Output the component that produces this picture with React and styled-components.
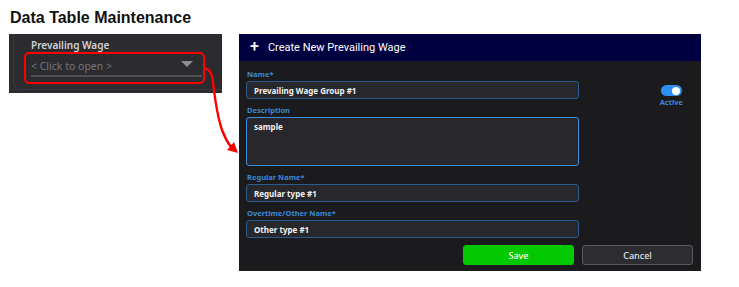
import React from "react";
import styled, { createGlobalStyle } from "styled-components";

const GlobalStyle = createGlobalStyle`
  html, body {
    margin: 0;
    background: #ffffff;
  }
  body {
    width: 739px;
    height: 287px;
    overflow: hidden;
  }
`;

const Page = styled.div`
  position: relative;
  width: 739px;
  height: 287px;
  box-sizing: border-box;
  padding: 9px 0 0 9px;
`;

const Title = styled.h1`
  margin: 0 0 7px 1px;
  font: bold 16px/18px "Liberation Sans", Arial, sans-serif;
  color: #111111;
`;

const Row = styled.div`
  display: flex;
  align-items: flex-start;
  gap: 17px;
`;

// left: the field as it sits on the page
const FieldPanel = styled.div`
  width: 213px;
  height: 59px;
  box-sizing: border-box;
  background: #2b2b30;
  overflow: hidden;
  padding-bottom: 3px;
  display: flex;
  flex-direction: column;
  justify-content: flex-end;
`;

const PanelCard = styled.div`
  margin-left: 4px;
  margin-right: -6px;
  padding: 4px 0 5px 10px;
  border-left: 1px solid #38383e;
  border-bottom: 1px solid #38383e;
  border-bottom-left-radius: 8px;
`;

const PanelLabel = styled.div`
  margin-left: 7px;
  font: 600 10px/14px "Noto Sans", "Open Sans", sans-serif;
  color: #d2d2d6;
`;

const Highlight = styled.div`
  width: 181px;
  box-sizing: border-box;
  border: 2px solid #ff0000;
  border-radius: 5px;
  padding: 2px 1px 5px 5px;
`;

const Select = styled.div`
  display: flex;
  align-items: center;
  justify-content: space-between;
  height: 19px;
  padding-right: 9px;
  border-bottom: 2px solid #4f4f55;
  font: 400 10.5px/16px "Noto Sans", "Open Sans", sans-serif;
  color: #77777d;
`;

const Caret = styled.span`
  width: 0;
  height: 0;
  margin-top: -4px;
  border-left: 6px solid transparent;
  border-right: 6px solid transparent;
  border-top: 6px solid #8e8e94;
`;

// right: the dialog
const Dialog = styled.div`
  width: 462px;
  height: 237px;
  background: #1b1b1d;
  display: flex;
  flex-direction: column;
`;

const DialogHeader = styled.div`
  height: 27px;
  flex: none;
  background: #000040;
  display: flex;
  align-items: center;
  gap: 9px;
  padding-left: 11px;
  font: 400 11px/1 Roboto, "Noto Sans", sans-serif;
  color: #ffffff;
`;

const Plus = styled.span`
  font: 500 16px/1 Roboto, sans-serif;
  margin-top: -2px;
`;

const DialogBody = styled.div`
  flex: 1;
  padding: 8px 8px 6px 7px;
  display: flex;
  flex-direction: column;
`;

const Columns = styled.div`
  display: flex;
  justify-content: space-between;
`;

const Form = styled.div`
  width: 333px;
  display: flex;
  flex-direction: column;
  gap: 6px;
`;

const Field = styled.div`
  display: flex;
  flex-direction: column;
`;

const Label = styled.label`
  height: 11px;
  margin: 0 0 1px 1px;
  font: 700 7.5px/11px "Noto Sans", "Open Sans", sans-serif;
  color: #3a88d6;
`;

const TextInput = styled.input`
  height: 18px;
  box-sizing: border-box;
  margin: 0;
  padding: 0 7px;
  border: 1px solid ${(p) => (p.$focused ? "#3c8de0" : "#2a5b8e")};
  border-radius: 3px;
  background: #27272c;
  font: 700 8px/16px "Noto Sans", "Open Sans", sans-serif;
  color: #f2f2f2;
  outline: none;
`;

const TextArea = styled.textarea`
  height: 49px;
  box-sizing: border-box;
  margin: 0;
  padding: 3px 7px;
  border: 1px solid #3c8de0;
  border-radius: 3px;
  background: #27272c;
  font: 700 8px/11px "Noto Sans", "Open Sans", sans-serif;
  color: #f2f2f2;
  resize: none;
  outline: none;
`;

const Status = styled.div`
  display: flex;
  flex-direction: column;
  align-items: center;
  gap: 1px;
  margin: 16px 10px 0 0;
`;

const Toggle = styled.span`
  width: 21px;
  height: 11px;
  border-radius: 6px;
  background: ${(p) => (p.$on ? "#2e90f5" : "#55555a")};
  display: flex;
  align-items: center;
  justify-content: ${(p) => (p.$on ? "flex-end" : "flex-start")};
  padding: 0 1.5px;
  box-sizing: border-box;
`;

const Knob = styled.span`
  width: 8px;
  height: 8px;
  border-radius: 50%;
  background: #ffffff;
`;

const StatusText = styled.span`
  font: 700 7.5px/11px "Noto Sans", "Open Sans", sans-serif;
  color: #3a88d6;
`;

const Actions = styled.div`
  display: flex;
  justify-content: flex-end;
  gap: 8px;
  margin-top: 7px;
`;

const Button = styled.button`
  width: 111px;
  height: 20px;
  box-sizing: border-box;
  border-radius: 3px;
  border: 1px solid ${(p) => (p.$primary ? "#03c903" : "#5a5a60")};
  background: ${(p) => (p.$primary ? "#03c903" : "#2c2c31")};
  color: ${(p) => (p.$primary ? "#ffffff" : "#e2e2e6")};
  font: 500 9px/1 "Noto Sans", "Open Sans", sans-serif;
  padding: 0;
`;

const ArrowLayer = styled.svg`
  position: absolute;
  left: 0;
  top: 0;
  pointer-events: none;
`;

export default function App() {
  return (
    <Page>
      <GlobalStyle />
      <Title>Data Table Maintenance</Title>
      <Row>
        <FieldPanel>
          <PanelCard>
            <PanelLabel>Prevailing Wage</PanelLabel>
            <Highlight>
              <Select>
                <span>&lt; Click to open &gt;</span>
                <Caret />
              </Select>
            </Highlight>
          </PanelCard>
        </FieldPanel>

        <Dialog>
          <DialogHeader>
            <Plus>+</Plus>
            <span>Create New Prevailing Wage</span>
          </DialogHeader>
          <DialogBody>
            <Columns>
              <Form>
                <Field>
                  <Label>Name*</Label>
                  <TextInput readOnly defaultValue="Prevailing Wage Group #1" />
                </Field>
                <Field>
                  <Label>Description</Label>
                  <TextArea readOnly defaultValue="sample" />
                </Field>
                <Field>
                  <Label>Regular Name*</Label>
                  <TextInput readOnly defaultValue="Regular type #1" />
                </Field>
                <Field>
                  <Label>Overtime/Other Name*</Label>
                  <TextInput readOnly defaultValue="Other type #1" />
                </Field>
              </Form>
              <Status>
                <Toggle $on>
                  <Knob />
                </Toggle>
                <StatusText>Active</StatusText>
              </Status>
            </Columns>
            <Actions>
              <Button $primary>Save</Button>
              <Button>Cancel</Button>
            </Actions>
          </DialogBody>
        </Dialog>
      </Row>

      <ArrowLayer width="739" height="287" viewBox="0 0 739 287">
        <path
          d="M203 68 C209 68 212 72 213 82 C215 100 218 118 222 130 C225 138 228 143 231 147"
          fill="none"
          stroke="#ff0000"
          strokeWidth="2.4"
        />
        <polygon points="238,153 227,150 234,142" fill="#ff0000" />
      </ArrowLayer>
    </Page>
  );
}
